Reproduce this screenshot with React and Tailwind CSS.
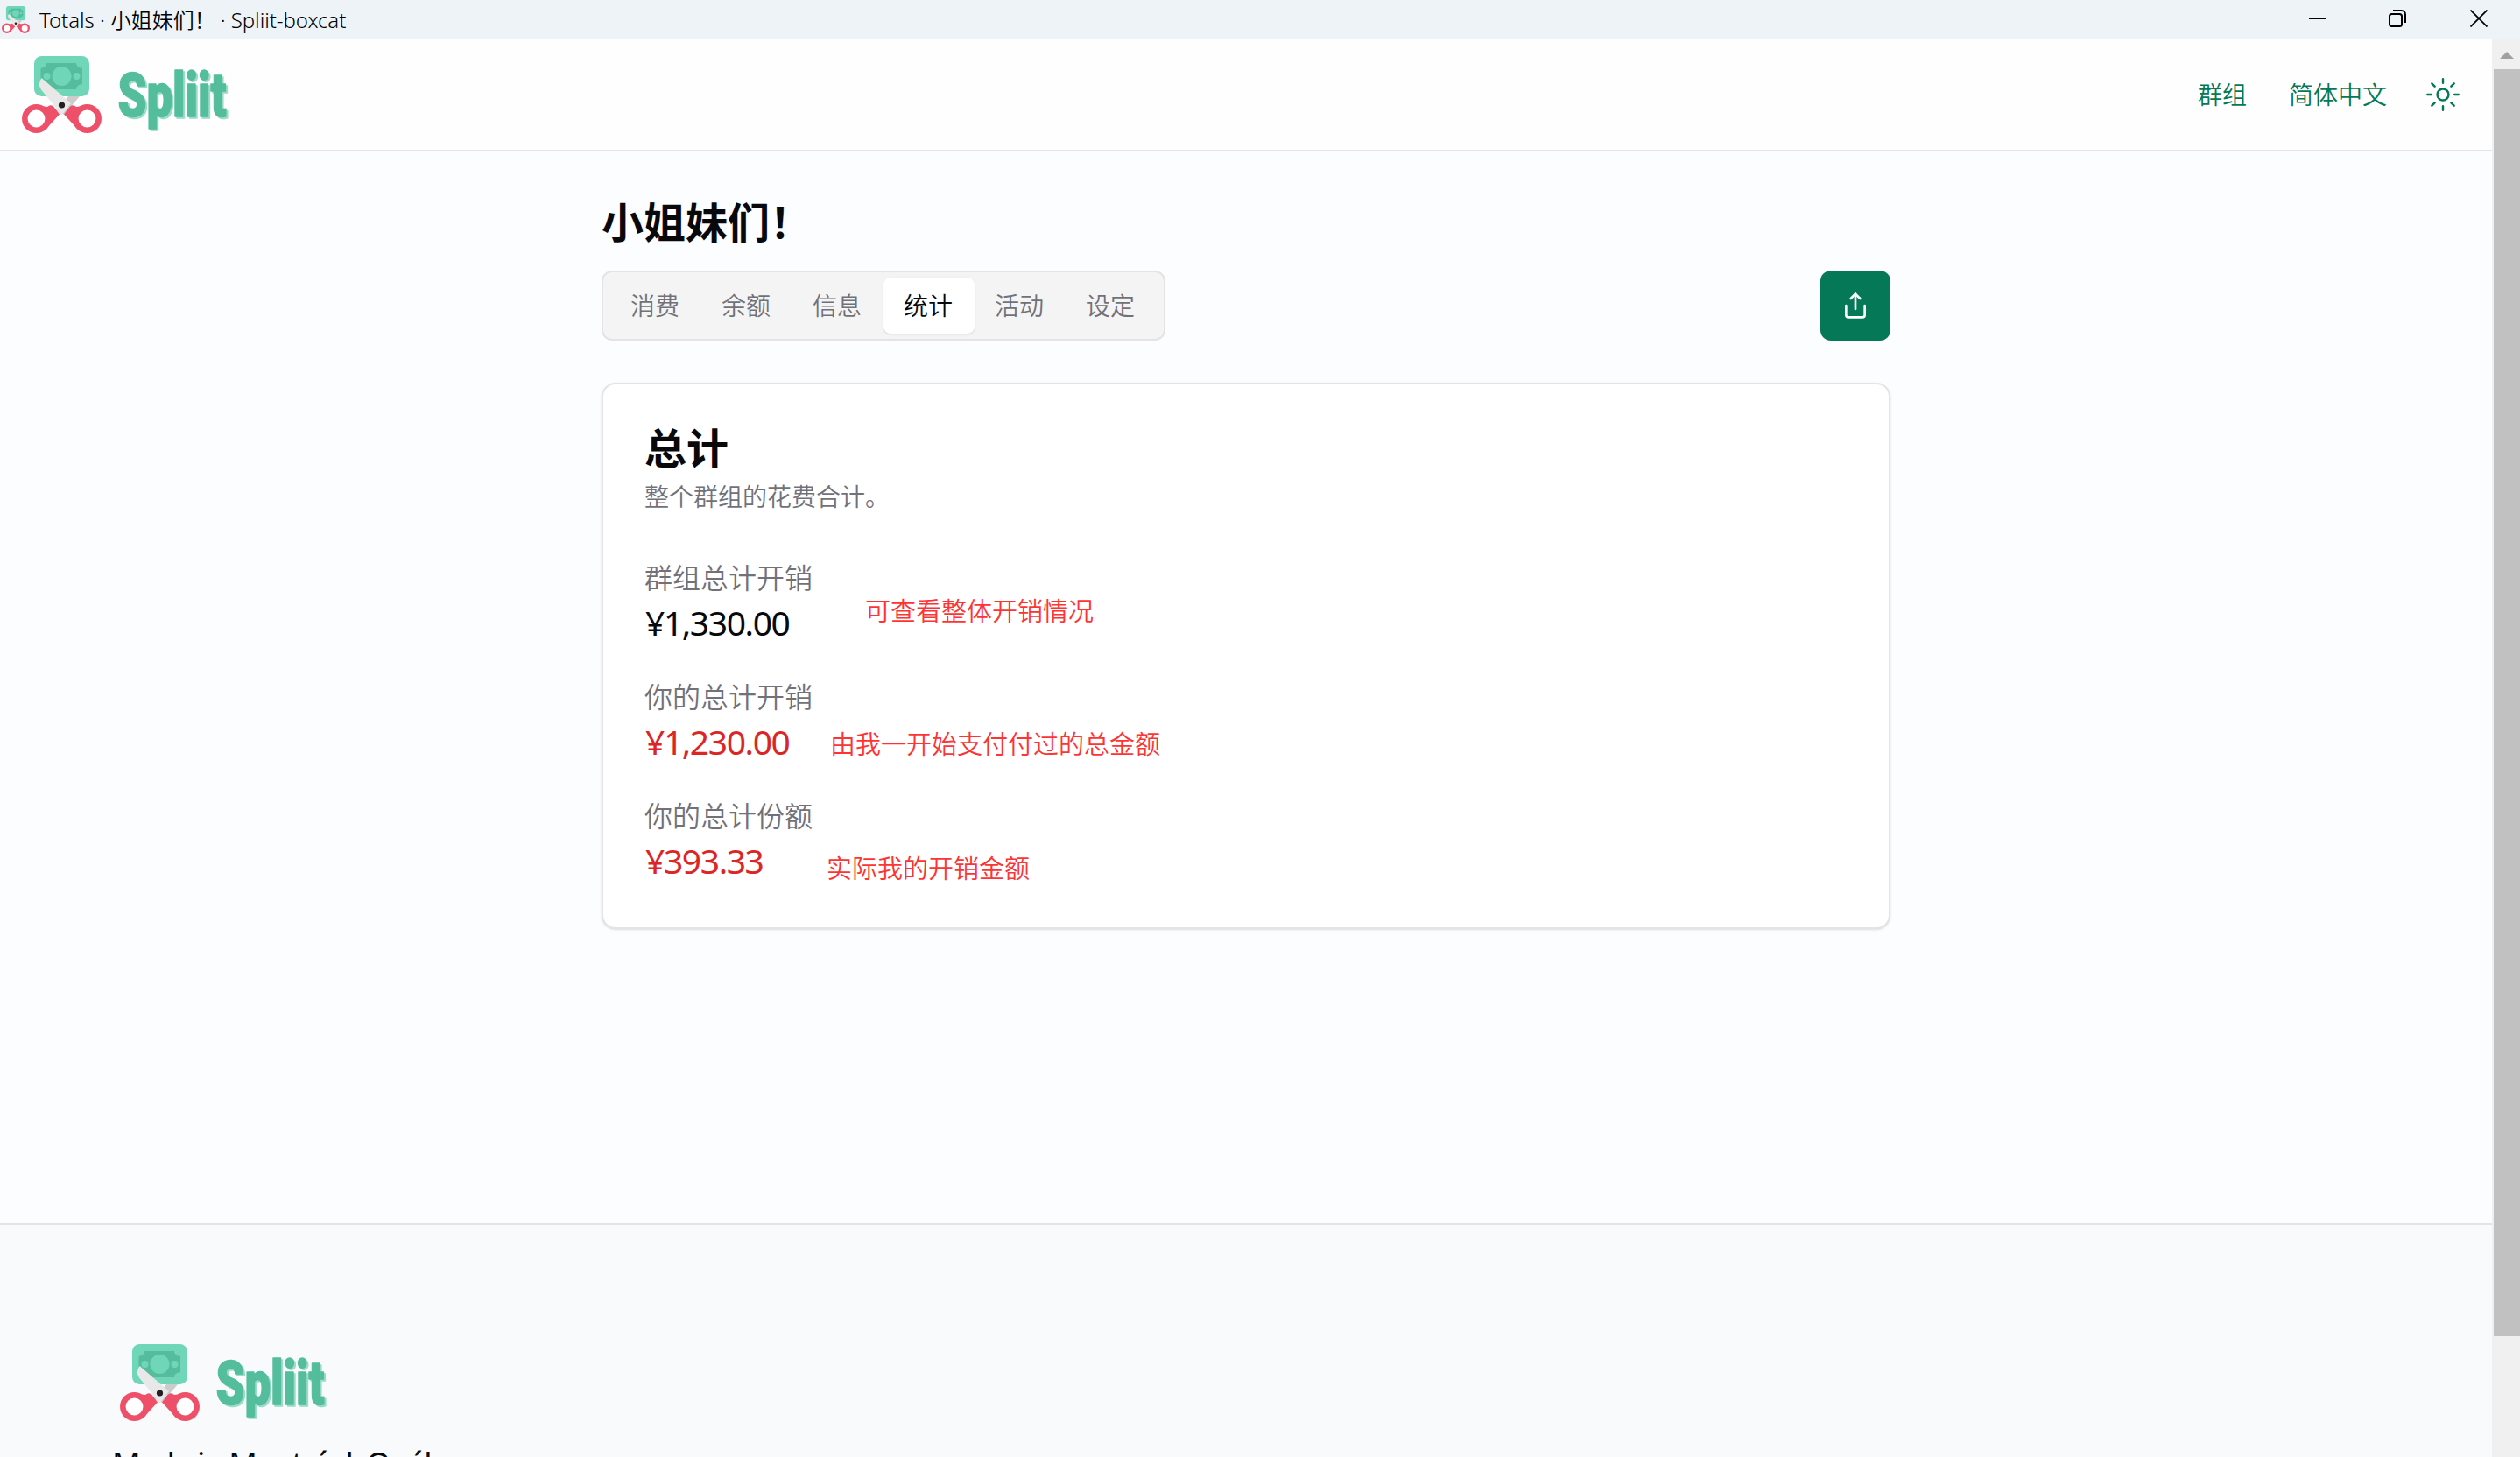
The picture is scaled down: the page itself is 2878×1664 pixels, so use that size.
import { Share } from "lucide-react";

const tabs = ["消费", "余额", "信息", "统计", "活动", "设定"];

const totals = [
  { label: "群组总计开销", value: "¥1,330.00", color: "text-[#09090b]" },
  { label: "你的总计开销", value: "¥1,230.00", color: "text-[#dc2626]" },
  { label: "你的总计份额", value: "¥393.33", color: "text-[#dc2626]" },
];

function LogoMark({ className }) {
  return (
    <svg viewBox="0 0 91 88" className={className}>
      {/* bank note */}
      <rect x="14" y="0" width="63" height="46" rx="8.500" fill="#6fd6b8" />
      <path d="M28 8h34q0 5 7 6v18q-7 1 -7 6H29q0 -5 -7.500 -6V14q6.500 -1 6.500 -6z" fill="#57bc9c" />
      <circle cx="45.500" cy="23" r="11" fill="#6fd6b8" />
      <circle cx="28.500" cy="23" r="4" fill="#6fd6b8" />
      <circle cx="62.500" cy="23" r="4" fill="#6fd6b8" />
      {/* blades */}
      <path d="M53 46H66L48 67L40 61z" fill="#cccccc" />
      <path d="M44 58L54 58L45.500 67L37 61z" fill="#dedede" />
      <path d="M22.500 25Q17.500 32 22 38.500L45.500 67L56 54z" fill="#e8e8e8" />
      {/* handles */}
      <path d="M20 57L29 58Q33 54.500 36.500 58L43 66.500L26 85z" fill="#ee5069" />
      <path d="M71 57L62 58Q58 54.500 54.500 58L48 66.500L65 85z" fill="#ee5069" />
      <circle cx="16.500" cy="71.500" r="13.200" fill="white" stroke="#ee5069" strokeWidth="6.500" />
      <circle cx="74.500" cy="71.500" r="13.200" fill="white" stroke="#ee5069" strokeWidth="6.500" />
      <circle cx="45.500" cy="56" r="3.600" fill="#231f20" />
    </svg>
  );
}

function Logo() {
  return (
    <div className="flex items-start">
      <LogoMark className="h-[88px] w-[91px]" />
      <svg
        viewBox="0 0 130 88"
        className="ml-[18px] h-[88px] w-[130px] overflow-visible font-['Roboto',sans-serif] text-[70px] font-black"
        strokeWidth="1.500"
        strokeLinejoin="round"
      >
        <text x="2.500" y="70.500" textLength="124" lengthAdjust="spacingAndGlyphs" fill="#9adcc7" stroke="#9adcc7">
          Spliit
        </text>
        <text x="0.500" y="69" textLength="124" lengthAdjust="spacingAndGlyphs" fill="#54bd9b" stroke="#54bd9b">
          Spliit
        </text>
      </svg>
    </div>
  );
}

function SunIcon() {
  return (
    <svg
      viewBox="0 0 15 15"
      className="size-[38px]"
      fill="none"
      stroke="currentColor"
      strokeWidth="0.950"
      strokeLinecap="round"
    >
      <circle cx="7.500" cy="7.500" r="2.550" />
      <path d="M7.500 .5v1.800M7.500 12.700v1.800M.5 7.500h1.800M12.700 7.500h1.800M2.500 2.500l1.300 1.300M11.200 11.200l1.300 1.300M2.500 12.500l1.300-1.300M11.200 3.800l1.300-1.300" />
    </svg>
  );
}

function TitleBar() {
  return (
    <div className="flex h-[45px] shrink-0 items-center bg-[#eef3f8] text-black">
      <LogoMark className="ml-[2px] mt-[-1px] h-[31px] w-[32px]" />
      <span className="ml-[11px] text-2xl tracking-[-0.06px] whitespace-pre">Totals · 小姐妹们！ · Spliit-boxcat</span>
      <div className="mb-[3px] ml-auto flex items-center pr-[37px]">
        <svg viewBox="0 0 20 20" className="mr-[71px] size-5" stroke="currentColor" strokeWidth="2">
          <path d="M0 10h20" />
        </svg>
        <svg viewBox="0 0 20 20" className="mr-[73px] size-5" fill="none" stroke="currentColor" strokeWidth="2">
          <rect x="1" y="5" width="14" height="14" rx="2.500" />
          <path d="M5 1h9.500a4.500 4.500 0 0 1 4.500 4.500V15" />
        </svg>
        <svg viewBox="0 0 20 20" className="size-5" stroke="currentColor" strokeWidth="1.800">
          <path d="M.5 .5l19 19M19.500 .5l-19 19" />
        </svg>
      </div>
    </div>
  );
}

function Header() {
  return (
    <header className="flex h-32 shrink-0 items-start justify-between border-b-2 border-[#e4e4e7] bg-[#fefefe] pt-[19px] pl-[25px]">
      <Logo />
      <nav className="flex h-[88px] items-center pr-[37px] text-[28px] text-[#047857]">
        <a className="mr-12">群组</a>
        <a className="mr-[45px]">简体中文</a>
        <SunIcon />
      </nav>
    </header>
  );
}

function TotalsCard() {
  return (
    <section className="relative mt-12 h-[624px] rounded-2xl border-2 border-[#e4e4e7] bg-white px-[47px] pt-[49px] shadow-sm">
      <h2 className="text-5xl leading-[48px] font-bold">总计</h2>
      <p className="mt-[11px] text-[28px] leading-10 text-[#71717a]">整个群组的花费合计。</p>
      <div className="mt-[49px] flex flex-col gap-[34px]">
        {totals.map((item) => (
          <div key={item.label}>
            <div className="text-[32px] leading-[48px] text-[#71717a]">{item.label}</div>
            <div className={`pl-px text-[39px] leading-[54px] font-normal tracking-[-1.4px] ${item.color}`}>
              {item.value}
            </div>
          </div>
        ))}
      </div>

      {/* Notes over the card */}
      <span className="absolute top-[238px] left-[299px] text-[29px] leading-[42px] text-[#ff3333]">可查看整体开销情况</span>
      <span className="absolute top-[390px] left-[259px] text-[29px] leading-[42px] text-[#ff3333]">由我一开始支付付过的总金额</span>
      <span className="absolute top-[532px] left-[255px] text-[29px] leading-[42px] text-[#ff3333]">实际我的开销金额</span>
    </section>
  );
}

export default function App() {
  return (
    <div className="flex h-[1664px] w-[2878px] flex-col overflow-hidden bg-[#fcfdff] font-['Noto_Sans','Noto_Sans_CJK_SC',sans-serif] font-[350] text-[#09090b]">
      <TitleBar />
      <div className="flex min-h-0 flex-1">
        <div className="flex min-w-0 flex-1 flex-col">
          <Header />

          <main className="mx-auto h-[1224px] w-[1472px] shrink-0 pt-[51px]">
            <h1 className="text-5xl leading-[60px] font-bold">小姐妹们！</h1>
            <div className="mt-[25px] flex justify-between">
              <div className="flex h-20 items-center rounded-xl border-2 border-[#e4e4e7] bg-[#f4f4f4] px-2 text-[28px] text-[#71717a]">
                {tabs.map((tab) => (
                  <button
                    key={tab}
                    className={
                      tab === "统计"
                        ? "h-16 rounded-lg bg-white pr-[25px] pl-[23px] text-[#09090b] shadow-sm"
                        : "h-16 pr-[25px] pl-[23px]"
                    }
                  >
                    {tab}
                  </button>
                ))}
              </div>
              <button className="flex size-20 items-center justify-center rounded-xl bg-[#047857] text-white">
                <Share size={32} />
              </button>
            </div>
            <TotalsCard />
          </main>

          <footer className="min-h-0 flex-1 overflow-hidden border-t-2 border-[#e4e4e7] bg-[#f9fafc] pt-[136px] pl-32">
            <div className="pl-[9px]">
              <Logo />
            </div>
            <p className="mt-[21px] text-4xl leading-[56px] font-normal tracking-[-1.55px] whitespace-nowrap">
              Made in Montréal, Québec
            </p>
          </footer>
        </div>

        <div className="w-8 shrink-0 bg-[#f0f0f0] pl-[2px]">
          <div className="flex h-[34px] items-center justify-center pt-[2px]">
            <svg viewBox="0 0 16 8" className="h-2 w-4 fill-[#a0a0a0]">
              <path d="M8 0l8 8H0z" />
            </svg>
          </div>
          <div className="h-[1447px] bg-[#c1c1c1]" />
        </div>
      </div>
    </div>
  );
}
